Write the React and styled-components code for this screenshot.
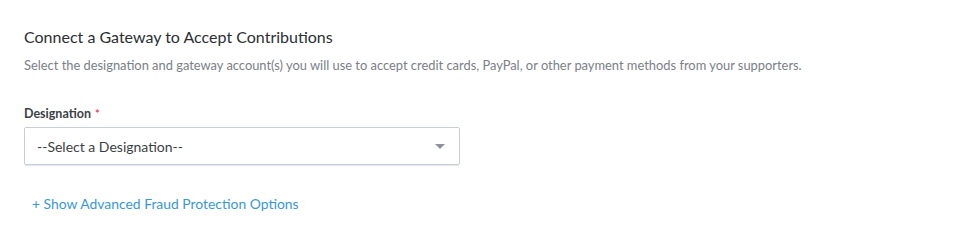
import React from 'react';
import styled, { createGlobalStyle } from 'styled-components';

const GlobalStyle = createGlobalStyle`
    body {
        margin: 0;
        background: #ffffff;
        font-family: Lato, "Open Sans", sans-serif;
    }
`;

const Page = styled.div`
    padding: 27px 24px 20px 24px;
`;

const Title = styled.h2`
    margin: 0;
    font-size: 16px;
    font-weight: 400;
    line-height: 20px;
    color: #2b2f33;
`;

const Description = styled.p`
    margin: 9px 0 0 0;
    font-size: 12.88px;
    line-height: 18px;
    color: #7a8088;
`;

const Field = styled.div`
    margin-top: 32px;
    width: 436px;
`;

const Label = styled.label`
    display: block;
    font-size: 12.5px;
    font-weight: 700;
    line-height: 16px;
    color: #3c4146;
    margin-bottom: 5px;
`;

const Required = styled.span`
    color: #e0475a;
    margin-left: 4px;
    vertical-align: top;
    font-size: 11px;
`;

const SelectBox = styled.div`
    display: flex;
    align-items: center;
    justify-content: space-between;
    box-sizing: border-box;
    height: 38px;
    padding: 0 14px 0 12px;
    border: 1px solid #c9ced6;
    border-radius: 2px;
    box-shadow: 0 2px 1px -1px #dfe5ec;
    font-size: 14px;
    color: #3b3f44;
    cursor: pointer;
`;

const Caret = styled.span`
    width: 0;
    height: 0;
    border-left: 5px solid transparent;
    border-right: 5px solid transparent;
    border-top: 5px solid #8f9399;
`;

const LinkButton = styled.a`
    display: inline-block;
    margin: 30px 0 0 8px;
    font-size: 13.9px;
    line-height: 17px;
    color: #3a97d4;
    text-decoration: none;
    cursor: pointer;
`;

const App = () => {
    return (
        <>
            <GlobalStyle />
            <Page>
                <Title>Connect a Gateway to Accept Contributions</Title>
                <Description>
                    Select the designation and gateway account(s) you will use to accept credit cards, PayPal, or other payment methods from your supporters.
                </Description>
                <Field>
                    <Label>
                        Designation<Required>*</Required>
                    </Label>
                    <SelectBox>
                        <span>--Select a Designation--</span>
                        <Caret />
                    </SelectBox>
                </Field>
                <LinkButton>+ Show Advanced Fraud Protection Options</LinkButton>
            </Page>
        </>
    );
};

export default App;
